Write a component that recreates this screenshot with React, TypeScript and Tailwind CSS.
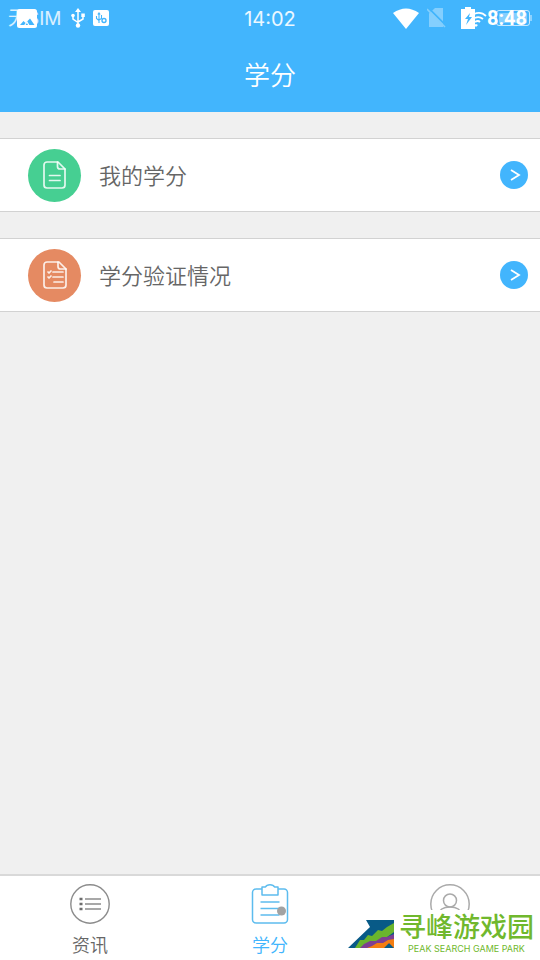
import React, { useState } from 'react';

type TabId = 'news' | 'credits' | 'profile';

const StatusBar = () => (
  <div className="grid h-9 grid-cols-3 items-center text-[20px] leading-6">
    <div className="flex items-center pl-2">
      <div className="relative flex w-[54px] items-center pt-0.5">
        <span className="text-[19px] text-white/80">无SIM</span>
        <svg className="absolute left-[9px] top-1 h-[19px] w-5" viewBox="0 0 20 19">
          <rect width="20" height="19" rx="2.5" fill="#fff" />
          <path d="M3 16l3.500-4 2 2L13 9.500l4.500 6.500z" fill="#42b5fd" />
          <path d="M7.500 16.500l2.500-3.500 2 3.500" fill="none" stroke="#fff" strokeWidth="1.200" />
        </svg>
      </div>
      <svg className="ml-2 h-5 w-4" viewBox="0 0 16 20" fill="none" stroke="#fff" strokeWidth="1.5">
        <path d="M8 3v14M3 8v3l5 3.500M13 7v4l-5 3" />
        <path d="M8 0l3 4H5z" fill="#fff" stroke="none" />
        <circle cx="8" cy="17.500" r="2.200" fill="#fff" stroke="none" />
        <circle cx="3" cy="7.500" r="1.800" fill="#fff" stroke="none" />
        <rect x="11.300" y="5.500" width="3.500" height="3.500" fill="#fff" stroke="none" />
      </svg>
      <svg className="ml-[7px] h-4 w-4" viewBox="0 0 16 16" fill="none" stroke="#42b5fd" strokeWidth="1.100">
        <rect width="16" height="16" rx="2" fill="#fff" stroke="none" />
        <path d="M6 3v10M3.500 6v2.500L6 10.500M8.500 5v3.500L6 10M4.800 4.500L6 3l1.200 1.500" />
        <circle cx="11" cy="10.500" r="2" strokeWidth="1.400" />
      </svg>
    </div>
    <time className="pt-0.5 text-center text-white/90">14:02</time>
    <div className="flex items-center justify-end pr-2">
      <svg className="h-[21px] w-[26px]" viewBox="0 0 26 21">
        <path d="M0 5Q13-4 26 5L13 21z" fill="#fff" />
      </svg>
      <svg className="ml-2 h-5 w-5" viewBox="0 0 20 20">
        <path d="M8 0h8v19H2V5.500z" fill="#fff" fillOpacity=".35" />
        <path d="M1.500 0l18 18" stroke="#42b5fd" strokeWidth="1.800" />
        <path d="M0 1l18 18" stroke="#84cffc" strokeWidth="1.600" />
      </svg>
      <svg className="ml-3.5 h-[22px] w-[26px]" viewBox="0 0 26 22">
        <path d="M0 2h4V0h6v2h4v20H0z" fill="#fff" />
        <path d="M9 6l-5 6h3l-2 6 6-8H8z" fill="#42b5fd" />
        <g fill="none" stroke="#fff" strokeWidth="1.800">
          <path d="M13 7q7-3 12 2M14 11q4-2 8 1M14 15q3-2 5 0" />
        </g>
        <path d="M13 18l2-1 2 1-2 2z" fill="#fff" />
      </svg>
      <div className="relative flex w-[45px]">
        <span className="font-['Roboto'] font-bold">8:48</span>
        <svg className="absolute right-0 top-1 h-4 w-[36px]" viewBox="0 0 36 16" fill="none">
          <rect x=".5" y=".5" width="33" height="15" rx="2.500" stroke="#fff" strokeOpacity=".7" />
          <rect x="3" y="3" width="28" height="10" rx="1" fill="#fff" fillOpacity=".35" />
          <path d="M35 5v6" stroke="#fff" strokeOpacity=".8" />
        </svg>
      </div>
    </div>
  </div>
);

const CreditIcon = ({ checklist = false }: { checklist?: boolean }) => (
  <span
    className={`flex size-[53px] shrink-0 items-center justify-center rounded-full ${
      checklist ? 'bg-[#e58a62]' : 'bg-[#46cf92]'
    }`}
  >
    <svg className="h-7 w-6" viewBox="0 0 24 28" fill="none" stroke="#fff" strokeOpacity=".85" strokeWidth="1.700" strokeLinecap="round" strokeLinejoin="round">
      {checklist ? (
        <>
          <path d="M16 1H4a3 3 0 0 0-3 3v20a3 3 0 0 0 3 3h16a3 3 0 0 0 3-3V8z" />
          <path d="M15 1v4.500A2.500 2.500 0 0 0 17.500 8H23" />
          <path d="M10 11h10M10 16h10M11 21h9M5 11l1 1 2-2M5 16l1 1 2-2" />
        </>
      ) : (
        <>
          <path d="M15 1H4a3 3 0 0 0-3 3v20a3 3 0 0 0 3 3h15a3 3 0 0 0 3-3V8z" />
          <path d="M14.500 1v4.500A2.500 2.500 0 0 0 17 8h5" />
          <path d="M6.500 14.500h10.500M6.500 19.500h10.500" />
        </>
      )}
    </svg>
  </span>
);

const CreditRow = ({ label, checklist }: { label: string; checklist?: boolean }) => (
  <button
    type="button"
    className="flex h-[74px] w-full items-center border-y border-[#d2d2d2] bg-white pl-7 pr-3 text-left"
  >
    <CreditIcon checklist={checklist} />
    <span className="ml-[18px] flex-1 pt-0.5 text-[22px] font-[350] leading-8 text-[#666]">{label}</span>
    <svg className="size-7" viewBox="0 0 28 28">
      <circle cx="14" cy="14" r="14" fill="#42b5fd" />
      <path d="M11 9l8 5-8 5" fill="none" stroke="#fff" strokeWidth="1.800" />
    </svg>
  </button>
);

const NewsIcon = () => (
  <svg className="size-10" viewBox="0 0 40 40" fill="none" stroke="#8c8c8c">
    <circle cx="20" cy="20" r="19.200" strokeWidth="1.400" />
    <path d="M15 15h16M15 20h16M15 25h16" strokeWidth="1.700" />
    <path d="M9.500 15h3M9.500 20h3M9.500 25h3" stroke="#6d6d6d" strokeWidth="2.600" />
  </svg>
);

const ClipboardIcon = () => (
  <svg className="size-10" viewBox="0 0 40 40" fill="none" stroke="#5dbcee" strokeWidth="1.500" strokeLinejoin="round">
    <path d="M12 5H6a3.500 3.500 0 0 0-3.500 3.500v27A3.500 3.500 0 0 0 6 39h28a3.500 3.500 0 0 0 3.500-3.500v-27A3.500 3.500 0 0 0 34 5h-6" />
    <path d="M12 11V3h3.500q1-2.200 4.500-2.200T24.500 3H28v8z" />
    <path d="M10.500 18h19M10.500 24.500h19M10.500 31h19" />
    <circle cx="31.500" cy="27" r="4.500" fill="#a2a2a2" stroke="none" />
  </svg>
);

const ProfileIcon = () => (
  <svg className="size-10" viewBox="0 0 40 40" fill="none" stroke="#aaa" strokeWidth="1.500">
    <circle cx="20" cy="20" r="19.200" />
    <circle cx="20" cy="16.500" r="6.500" />
    <path d="M8 31c1-5 5-8 12-8s11 3 12 8" />
  </svg>
);

const tabs: { id: TabId; label: string; icon: React.ReactNode }[] = [
  { id: 'news', label: '资讯', icon: <NewsIcon /> },
  { id: 'credits', label: '学分', icon: <ClipboardIcon /> },
  { id: 'profile', label: '', icon: <ProfileIcon /> },
];

// Site mark that sits over the corner of the tab bar
const SiteMark = () => (
  <div className="pointer-events-none absolute bottom-0 right-0 flex h-[50px] items-start bg-white pr-1.5">
    <svg className="mt-2.5 h-[29px] w-[46px]" viewBox="0 0 46 29">
      <path d="M0 28L22 7l-4-7h28v28z" fill="#085a87" />
      <path d="M7 28l5-8 4 0 4-5 4 1 6-6 4 1 5-4 7-4v9L24 28z" fill="#6ab52d" />
      <path d="M12 28l4-4 6-3 6 0 6-4 5 0 7-3v8L26 28z" fill="#7e3f91" />
      <path d="M19 28l5-2 5-3 6 0 5-3 6-1v9l-5-5-5 5z" fill="#f47d11" />
    </svg>
    <div className="ml-[5px] flex flex-col items-center text-[#70b82d]">
      <span className="pt-0.5 text-[27px] font-medium leading-[32px]">寻峰游戏园</span>
      <span className="text-[9px] leading-[10px]">PEAK SEARCH GAME PARK</span>
    </div>
  </div>
);

export default function App() {
  const [activeTab, setActiveTab] = useState<TabId>('credits');

  return (
    <div className="flex min-h-screen flex-col bg-[#f0f0f0] font-['Inter','Noto_Sans_CJK_SC',sans-serif]">
      <header className="bg-[#42b5fd] text-white">
        <StatusBar />
        <h1 className="flex h-[76px] items-center justify-center pt-1 text-[26px] font-[350] leading-9">学分</h1>
      </header>

      <main className="flex flex-1 flex-col gap-[26px] pt-[26px]">
        <CreditRow label="我的学分" />
        <CreditRow label="学分验证情况" checklist />
      </main>

      <div className="relative">
        <nav className="grid h-[86px] grid-cols-3 border-t-2 border-[#d9d9d9] bg-white">
          {tabs.map((tab) => (
            <button
              key={tab.id}
              type="button"
              aria-label={tab.label || '我的'}
              onClick={() => setActiveTab(tab.id)}
              className={`flex flex-col items-center pt-2 text-[18px] font-[350] leading-6 ${
                activeTab === tab.id ? 'text-[#42b5fd]' : 'text-[#666]'
              }`}
            >
              {tab.icon}
              <span className="mt-2.5">{tab.label}</span>
            </button>
          ))}
        </nav>
        <SiteMark />
      </div>
    </div>
  );
}
